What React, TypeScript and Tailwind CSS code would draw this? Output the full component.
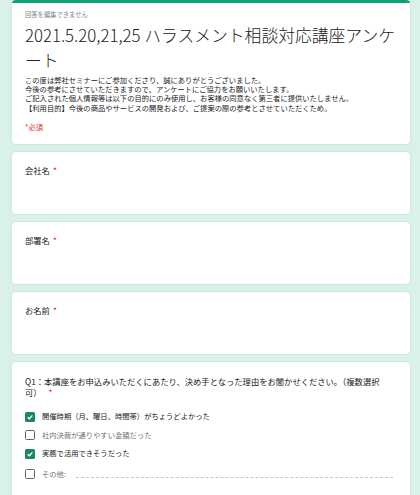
import React from 'react';

const FONT = { fontFamily: '"Noto Sans CJK JP", "Noto Sans", sans-serif' };

const Req: React.FC<{ gap?: string }> = ({ gap = 'ml-[3px]' }) => (
  <span className={`inline-block text-[#d93025] ${gap}`}>*</span>
);

const Check: React.FC<{ on?: boolean }> = ({ on }) =>
  on ? (
    <span className="flex h-[10px] w-[10px] items-center justify-center rounded-[1.5px] bg-[#1a8a5e]">
      <svg viewBox="0 0 10 10" className="h-[8px] w-[8px]">
        <path d="M2 5.2 L4.2 7.2 L8 3" fill="none" stroke="#fff" strokeWidth="1.6" />
      </svg>
    </span>
  ) : (
    <span className="h-[10px] w-[10px] rounded-[1.5px] border-[1.3px] border-[#5f6368]" />
  );

const TextCard: React.FC<{ label: string }> = ({ label }) => (
  <div className="h-[62px] rounded-[4px] bg-white px-[13px] pt-[13px] shadow-[0_0_0_1px_#cfe6e1]">
    <div className="text-[8.3px] leading-[11px] text-[#202124]">
      {label}
      <Req />
    </div>
  </div>
);

const options = [
  { text: '開催時期（月、曜日、時間帯）がちょうどよかった', on: true },
  { text: '社内決裁が通りやすい金額だった', on: false },
  { text: '実務で活用できそうだった', on: true },
];

export default function App() {
  return (
    <div className="min-h-[495px] bg-[#d9f0eb] pl-[12px] pr-[10px]" style={FONT}>
      <div className="flex flex-col gap-[8px]">
        <div className="overflow-hidden rounded-[4px] bg-white shadow-[0_0_0_1px_#cfe6e1]">
          <div className="h-[3px] bg-[#0f9f78]" />
          <div className="pb-[12px] pl-[13px] pr-[8px] pt-[8px]">
            <div className="text-[6.3px] leading-[8px] text-[#80868b]">回答を編集できません</div>
            <h1 className="mt-[3.5px] text-[16.8px] font-light leading-[25px] text-[#202124]">
              2021.5.20,21,25 ハラスメント相談対応講座アンケート
            </h1>
            <div className="mt-[3px] text-[7.3px] leading-[9.4px] text-[#202124]">
              <p>この度は弊社セミナーにご参加くださり、誠にありがとうございました。</p>
              <p>今後の参考にさせていただきますので、アンケートにご協力をお願いいたします。</p>
              <p>ご記入された個人情報等は以下の目的にのみ使用し、お客様の同意なく第三者に提供いたしません。</p>
              <p>【利用目的】今後の商品やサービスの開発および、ご提案の際の参考とさせていただくため。</p>
            </div>
            <div className="mt-[9.5px] text-[7.3px] leading-[9.4px] text-[#d93025]">*必須</div>
          </div>
        </div>

        <TextCard label="会社名" />
        <TextCard label="部署名" />
        <TextCard label="お名前" />

        <div className="rounded-t-[4px] bg-white px-[13px] pb-[12px] pt-[13.5px] shadow-[0_0_0_1px_#cfe6e1]">
          <div className="pr-[16px] text-[8.3px] leading-[11px] text-[#202124]">
            Q1：本講座をお申込みいただくにあたり、決め手となった理由をお聞かせください。（複数選択可）
            <Req gap="ml-[7px]" />
          </div>
          <div className="mt-[10px] flex flex-col">
            {options.map(o => (
              <div key={o.text} className="flex h-[18.5px] items-center gap-[7px]">
                <Check on={o.on} />
                <span className={`text-[7.3px] ${o.on ? 'text-[#202124]' : 'text-[#70757a]'}`}>{o.text}</span>
              </div>
            ))}
            <div className="mt-[2px] flex h-[18.5px] items-center gap-[7px]">
              <Check />
              <span className="text-[7.3px] text-[#70757a]">その他:</span>
              <span className="ml-[3px] mr-[4px] mt-[6px] flex-1 border-b border-dashed border-[#c4c7c5]" />
            </div>
          </div>
        </div>
      </div>
    </div>
  );
}
